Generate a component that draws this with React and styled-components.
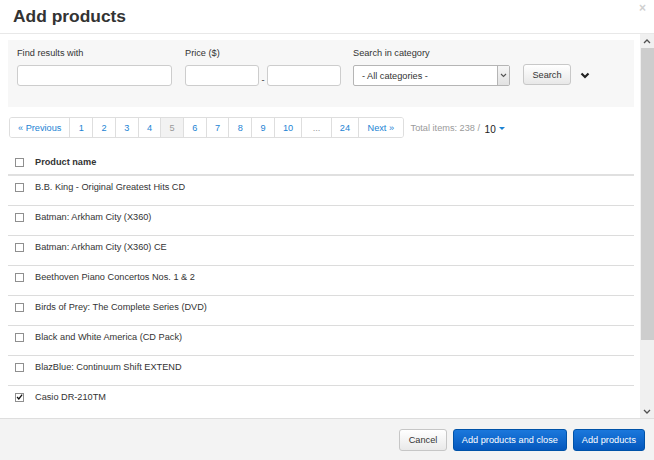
import React from "react";
import styled, { createGlobalStyle } from "styled-components";

const GlobalStyle = createGlobalStyle`
  html, body {
    margin: 0;
    padding: 0;
    background: #fff;
  }
  body {
    font-family: "Liberation Sans", Arial, sans-serif;
    font-size: 9.2px;
    color: #333;
  }
  * { box-sizing: border-box; }
`;

const products = [
  { name: "B.B. King - Original Greatest Hits CD" },
  { name: "Batman: Arkham City (X360)" },
  { name: "Batman: Arkham City (X360) CE" },
  { name: "Beethoven Piano Concertos Nos. 1 & 2" },
  { name: "Birds of Prey: The Complete Series (DVD)" },
  { name: "Black and White America (CD Pack)" },
  { name: "BlazBlue: Continuum Shift EXTEND" },
  { name: "Casio DR-210TM", checked: true },
];

const pages = ["1", "2", "3", "4", "5", "6", "7", "8", "9", "10", "...", "24"];

const App = () => {
  return (
    <>
      <GlobalStyle />
      <Dialog>
        <Header>
          <Title>Add products</Title>
          <Close>×</Close>
        </Header>

        <Body>
          <Content>
            <SearchPanel>
              <Field>
                <Label>Find results with</Label>
                <Input $w={155} />
              </Field>
              <Field>
                <Label>Price ($)</Label>
                <PriceRow>
                  <Input $w={74} />
                  <Dash>-</Dash>
                  <Input $w={74} />
                </PriceRow>
              </Field>
              <Field $shift={-1}>
                <Label>Search in category</Label>
                <SelectBox>
                  <SelectText>- All categories -</SelectText>
                  <SelectArrow>
                    <svg width="7" height="5" viewBox="0 0 7 5">
                      <path d="M1 1 L3.5 3.5 L6 1" fill="none" stroke="#555" strokeWidth="1.1" />
                    </svg>
                  </SelectArrow>
                </SelectBox>
              </Field>
              <SearchButton>Search</SearchButton>
              <Toggle>
                <svg width="10" height="7" viewBox="0 0 10 7">
                  <path d="M1.5 1.5 L5 5 L8.5 1.5" fill="none" stroke="#222" strokeWidth="2.2" />
                </svg>
              </Toggle>
            </SearchPanel>

            <PagerRow>
              <Pager>
                <PageItem $pad={8}>« Previous</PageItem>
                {pages.map((p) => (
                  <PageItem
                    key={p}
                    $active={p === "5"}
                    $muted={p === "..."}
                    $pad={p === "..." ? 10.5 : p.length > 1 ? 8 : 8.3}
                  >
                    {p}
                  </PageItem>
                ))}
                <PageItem $pad={8.5}>Next »</PageItem>
              </Pager>
              <Total>
                Total items: 238 / <PerPage>10</PerPage>
                <Caret />
              </Total>
            </PagerRow>

            <Table>
              <HeadRow>
                <Check />
                <HeadCell>Product name</HeadCell>
              </HeadRow>
              {products.map((p) => (
                <Row key={p.name}>
                  <Check>
                    {p.checked && (
                      <svg width="8" height="8" viewBox="0 0 8 8">
                        <path d="M1.2 4 L3.2 6.2 L7 1.2" fill="none" stroke="#111" strokeWidth="1.5" />
                      </svg>
                    )}
                  </Check>
                  <Cell>{p.name}</Cell>
                </Row>
              ))}
            </Table>
          </Content>

          <ScrollRail>
            <RailButton>
              <svg width="8" height="5" viewBox="0 0 8 5">
                <path d="M1 4 L4 1 L7 4" fill="none" stroke="#505050" strokeWidth="1.3" />
              </svg>
            </RailButton>
            <RailTrack>
              <Thumb style={{ height: 292 }} />
            </RailTrack>
            <RailButton>
              <svg width="8" height="5" viewBox="0 0 8 5">
                <path d="M1 1 L4 4 L7 1" fill="none" stroke="#505050" strokeWidth="1.3" />
              </svg>
            </RailButton>
          </ScrollRail>
        </Body>

        <Footer>
          <Button $pad={8.5}>Cancel</Button>
          <Button $primary>Add products and close</Button>
          <Button $primary>Add products</Button>
        </Footer>
      </Dialog>
    </>
  );
};

export default App;

const Dialog = styled.div`
  width: 654px;
  height: 460px;
  display: flex;
  flex-direction: column;
  background: #fff;
  overflow: hidden;
`;

const Header = styled.div`
  height: 34px;
  flex: none;
  display: flex;
  justify-content: space-between;
  align-items: flex-start;
  padding: 0 8px 0 13px;
  border-bottom: 1px solid #e8e8e8;
`;

const Title = styled.h3`
  margin: 6px 0 0;
  font-size: 17.4px;
  line-height: 20px;
  font-weight: bold;
  color: #333;
`;

const Close = styled.span`
  margin-top: 2px;
  font-size: 12px;
  font-weight: bold;
  color: #d0d0d0;
  line-height: 12px;
`;

const Body = styled.div`
  flex: 1;
  min-height: 0;
  display: flex;
`;

const Content = styled.div`
  flex: 1;
  min-width: 0;
  overflow: hidden;
  padding: 6px 6px 0 8px;
`;

const ScrollRail = styled.div`
  width: 14px;
  flex: none;
  display: flex;
  flex-direction: column;
  background: #f0f0f0;
`;

const RailButton = styled.div`
  height: 14px;
  flex: none;
  display: flex;
  align-items: center;
  justify-content: center;
`;

const RailTrack = styled.div`
  flex: 1;
  padding-left: 1px;
`;

const Thumb = styled.div`
  background: #cdcdcd;
`;

const SearchPanel = styled.div`
  background: #f7f7f7;
  display: flex;
  align-items: flex-end;
  gap: 13px;
  padding: 9px 9px 21px;
  height: 67px;
`;

const Field = styled.div`
  display: flex;
  flex-direction: column;
  gap: 6px;
  margin-left: ${(p) => p.$shift || 0}px;
`;

const Label = styled.label`
  line-height: 12px;
  color: #333;
`;

const Input = styled.input`
  width: ${(p) => p.$w}px;
  height: 21px;
  border: 1px solid #cdcdcd;
  border-radius: 3px;
  background: #fff;
  padding: 0 4px;
  font: inherit;
`;

const PriceRow = styled.div`
  display: flex;
  align-items: center;
`;

const Dash = styled.span`
  width: 8px;
  text-align: center;
  padding-top: 8px;
  line-height: 10px;
`;

const SelectBox = styled.div`
  width: 157px;
  height: 21px;
  border: 1px solid #b5b5b5;
  border-radius: 2px;
  background: #fff;
  display: flex;
  align-items: stretch;
`;

const SelectText = styled.span`
  flex: 1;
  display: flex;
  align-items: center;
  padding-left: 8px;
  color: #333;
`;

const SelectArrow = styled.span`
  width: 12px;
  border-left: 1px solid #b5b5b5;
  background: linear-gradient(#f6f6f6, #e2e2e2);
  display: flex;
  align-items: center;
  justify-content: center;
`;

const SearchButton = styled.button`
  width: 48px;
  height: 21px;
  margin-bottom: 1px;
  border: 1px solid #c8c8c8;
  border-radius: 3px;
  background: linear-gradient(#ffffff, #e8e8e8);
  font: inherit;
  color: #333;
  padding: 0;
`;

const Toggle = styled.span`
  display: flex;
  align-items: center;
  height: 21px;
  margin-left: -4px;
`;

const PagerRow = styled.div`
  display: flex;
  align-items: center;
  gap: 7px;
  margin-top: 10px;
  padding-left: 1px;
`;

const Pager = styled.div`
  display: flex;
  height: 21px;
  border: 1px solid #dedede;
  border-radius: 3px;
  overflow: hidden;
`;

const PageItem = styled.span`
  display: flex;
  align-items: center;
  padding: 0 ${(p) => p.$pad}px;
  color: ${(p) => (p.$active || p.$muted ? "#9a9a9a" : "#1c83d4")};
  background: ${(p) => (p.$active ? "#f2f2f2" : "#fff")};
  & + & {
    border-left: 1px solid #dedede;
  }
`;

const Total = styled.span`
  display: flex;
  align-items: center;
  color: #9a9a9a;
  white-space: pre;
  padding-top: 1px;
`;

const PerPage = styled.span`
  color: #222;
  font-size: 10px;
  margin-left: 2px;
  padding-top: 2px;
`;

const Caret = styled.span`
  margin-left: 3px;
  border-top: 3px solid #1c83d4;
  border-left: 3px solid transparent;
  border-right: 3px solid transparent;
`;

const Table = styled.div`
  margin-top: 10px;
`;

const HeadRow = styled.div`
  display: flex;
  align-items: flex-start;
  gap: 11px;
  height: 28px;
  padding: 9px 0 0 7px;
  border-bottom: 2px solid #e0e0e0;
`;

const Row = styled.div`
  display: flex;
  align-items: flex-start;
  gap: 11px;
  height: 30px;
  padding: 6px 0 0 7px;
  border-bottom: 1px solid #dcdcdc;
  &:last-child {
    border-bottom: none;
  }
`;

const Check = styled.span`
  width: 9px;
  height: 9px;
  margin-top: 1px;
  flex: none;
  border: 1px solid #8f8f8f;
  background: #fff;
  display: flex;
  align-items: center;
  justify-content: center;
  svg {
    margin-top: -1px;
  }
`;

const HeadCell = styled.span`
  font-weight: bold;
  line-height: 11px;
  color: #333;
`;

const Cell = styled.span`
  line-height: 11px;
  color: #333;
`;

const Footer = styled.div`
  flex: none;
  height: 42px;
  display: flex;
  justify-content: flex-end;
  align-items: center;
  gap: 6px;
  padding: 0 9px 0 0;
  background: #f3f3f3;
  border-top: 1px solid #dedede;
`;

const Button = styled.button`
  height: 22px;
  padding: 0 ${(p) => (p.$primary ? 8 : p.$pad)}px;
  border-radius: 3px;
  font: inherit;
  border: 1px solid ${(p) => (p.$primary ? "#0052a8" : "#c6c6c6")};
  color: ${(p) => (p.$primary ? "#fff" : "#333")};
  background: ${(p) =>
    p.$primary
      ? "linear-gradient(#1b78dc, #0457bd)"
      : "linear-gradient(#ffffff, #e9e9e9)"};
`;
